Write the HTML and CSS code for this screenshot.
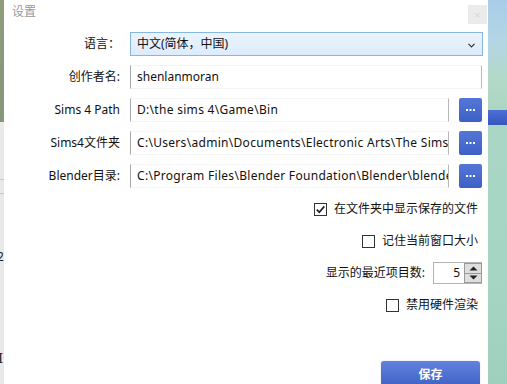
FILE: index.html
```html
<!DOCTYPE html>
<html>
<head>
<meta charset="utf-8">
<link rel="stylesheet" href="styles.css">
</head>
<body>
<div class="screen">
  <div class="left-edge">
    <div class="le-green"></div>
    <div class="le-grey">
      <div class="le-line first"></div>
      <div class="le-line"></div>
      <div class="le-digit">2</div>
      <div class="le-cursor">I</div>
    </div>
  </div>

  <div class="dialog">
    <div class="titlebar">
      <span class="title">设置</span>
      <span class="close">×</span>
    </div>

    <div class="form">
      <div class="row">
        <span class="lbl">语言：</span>
        <div class="combo">
          <span class="combo-text">中文(简体，中国)</span>
          <svg class="chev" width="7" height="5" viewBox="0 0 7 5"><path d="M0.5 0.8 L3.5 3.8 L6.5 0.8" fill="none" stroke="#333" stroke-width="1.2"/></svg>
        </div>
      </div>
      <div class="row">
        <span class="lbl">创作者名:</span>
        <div class="field wide">shenlanmoran</div>
      </div>
      <div class="row">
        <span class="lbl">Sims 4 Path</span>
        <div class="field path">D:\the sims 4\Game\Bin</div>
        <button class="browse" aria-label="..."><svg width="9" height="2" viewBox="0 0 9 2"><rect x="0" y="0" width="2" height="2" fill="#fff"/><rect x="3.5" y="0" width="2" height="2" fill="#fff"/><rect x="7" y="0" width="2" height="2" fill="#fff"/></svg></button>
      </div>
      <div class="row">
        <span class="lbl">Sims4文件夹</span>
        <div class="field path">C:\Users\admin\Documents\Electronic Arts\The Sims 4</div>
        <button class="browse" aria-label="..."><svg width="9" height="2" viewBox="0 0 9 2"><rect x="0" y="0" width="2" height="2" fill="#fff"/><rect x="3.5" y="0" width="2" height="2" fill="#fff"/><rect x="7" y="0" width="2" height="2" fill="#fff"/></svg></button>
      </div>
      <div class="row">
        <span class="lbl">Blender目录:</span>
        <div class="field path">C:\Program Files\Blender Foundation\Blender\blender.exe</div>
        <button class="browse" aria-label="..."><svg width="9" height="2" viewBox="0 0 9 2"><rect x="0" y="0" width="2" height="2" fill="#fff"/><rect x="3.5" y="0" width="2" height="2" fill="#fff"/><rect x="7" y="0" width="2" height="2" fill="#fff"/></svg></button>
      </div>
    </div>

    <div class="options">
      <div class="opt">
        <span class="cb"><svg width="11" height="11" viewBox="0 0 11 11"><path d="M1.8 5.6 L4.3 8.2 L9.3 2.4" fill="none" stroke="#222" stroke-width="1.7"/></svg></span>
        <span>在文件夹中显示保存的文件</span>
      </div>
      <div class="opt">
        <span class="cb"></span>
        <span>记住当前窗口大小</span>
      </div>
      <div class="opt spin-row">
        <span>显示的最近项目数:</span>
        <div class="spin">
          <span class="spin-val">5</span>
          <div class="spin-btns">
            <span class="spin-btn"><svg width="9" height="5" viewBox="0 0 9 5"><path d="M0.5 4.5 L4.5 0.5 L8.5 4.5 Z" fill="#222"/></svg></span>
            <span class="spin-btn"><svg width="9" height="5" viewBox="0 0 9 5"><path d="M0.5 0.5 L4.5 4.5 L8.5 0.5 Z" fill="#222"/></svg></span>
          </div>
        </div>
      </div>
      <div class="opt">
        <span class="cb"></span>
        <span>禁用硬件渲染</span>
      </div>
    </div>

    <div class="footer">
      <button class="save">保存</button>
    </div>
  </div>

  <div class="right-edge">
    <div class="re-top"></div>
    <div class="re-bar"></div>
    <div class="re-bottom"></div>
  </div>
</div>
</body>
</html>
```

FILE: styles.css
```css
html, body {
  margin: 0;
  padding: 0;
  overflow: hidden;
}
body {
  font-family: "Noto Sans", "Noto Sans CJK SC", sans-serif;
  font-size: 12px;
  color: #111;
}
.screen {
  display: flex;
  width: 507px;
  height: 384px;
  overflow: hidden;
}

/* left edge of background window */
.left-edge {
  width: 4px;
  flex: none;
  display: flex;
  flex-direction: column;
  overflow: hidden;
}
.le-green {
  height: 122px;
  flex: none;
  background: linear-gradient(#8f9d7e, #869676);
}
.le-grey {
  flex: 1;
  background: #e9e9e9;
  display: flex;
  flex-direction: column;
}
.le-line {
  height: 1px;
  flex: none;
  background: #c8c8c8;
  margin-top: 13px;
}
.le-line.first {
  margin-top: 57px;
}
.le-digit {
  flex: none;
  margin-top: 56px;
  margin-left: -3px;
  font-size: 12px;
  line-height: 14px;
  color: #222;
}
.le-cursor {
  flex: none;
  margin-top: 88px;
  margin-left: -2px;
  font-family: "DejaVu Serif", serif;
  font-size: 13px;
  line-height: 14px;
  color: #222;
}

/* dialog */
.dialog {
  width: 484px;
  flex: none;
  background: #fff;
  display: flex;
  flex-direction: column;
  overflow: hidden;
}
.dialog > * {
  flex: none;
}
.titlebar {
  height: 32px;
  display: flex;
  justify-content: space-between;
  align-items: flex-start;
  padding: 0 1px 0 8px;
  box-sizing: border-box;
}
.title {
  margin-top: 4px;
  line-height: 16px;
  color: #9a9a9a;
  font-size: 12px;
}
.close {
  margin-top: 5px;
  width: 19px;
  height: 19px;
  background: #ebebeb;
  color: #d8d8d8;
  font-size: 11px;
  line-height: 19px;
  text-align: center;
}

.form {
  display: flex;
  flex-direction: column;
  gap: 9px;
  padding-right: 5px;
}
.row {
  display: flex;
  align-items: center;
  height: 24px;
  flex: none;
}
.lbl {
  width: 116px;
  flex: none;
  text-align: right;
  margin-right: 10px;
  white-space: nowrap;
  line-height: 16px;
}
.combo {
  flex: 1;
  height: 24px;
  box-sizing: border-box;
  border: 1px solid #86b6e6;
  background: linear-gradient(#ecf4fc, #dcebfb);
  display: flex;
  align-items: center;
  justify-content: space-between;
  padding: 0 7px 0 6px;
}
.combo-text {
  line-height: 16px;
}
.chev {
  margin-top: 3px;
}
.field {
  flex: 1;
  min-width: 0;
  height: 24px;
  box-sizing: border-box;
  border-left: 1px solid #a9a9a9;
  border-right: 1px solid #b8b8b8;
  border-top: 1px solid #f4f4f4;
  border-bottom: 1px solid #f4f4f4;
  padding: 0 6px;
  line-height: 22px;
  white-space: nowrap;
  overflow: hidden;
}
.field.path {
  letter-spacing: 0.3px;
}
.field.wide {
  margin-right: 1px;
}
.browse {
  flex: none;
  width: 23px;
  height: 24px;
  margin-left: 10px;
  margin-right: 1px;
  border: none;
  border-radius: 2px;
  background: linear-gradient(#5477d6, #3d60c6);
  padding: 0;
  display: flex;
  align-items: center;
  justify-content: center;
}

.options {
  display: flex;
  flex-direction: column;
  align-items: flex-end;
  gap: 12px;
  margin-top: 11px;
  padding-right: 10px;
}
.opt {
  height: 20px;
  flex: none;
  display: flex;
  align-items: center;
  line-height: 16px;
  white-space: nowrap;
}
.cb {
  width: 13px;
  height: 13px;
  box-sizing: border-box;
  border: 1px solid #333;
  background: #fff;
  margin-right: 7px;
  display: flex;
  align-items: center;
  justify-content: center;
}
.spin-row {
  margin-right: -4px;
}
.spin {
  margin-left: 8px;
  width: 49px;
  height: 22px;
  box-sizing: border-box;
  border: 1px solid #b4b4b4;
  display: flex;
  justify-content: flex-end;
}
.spin-val {
  line-height: 20px;
  margin-right: 4px;
}
.spin-btns {
  width: 16px;
  display: flex;
  flex-direction: column;
  border-left: 1px solid #999;
}
.spin-btn {
  flex: 1;
  background: #dedede;
  border: 1px solid #9a9a9a;
  margin: 0 -1px 0 -1px;
  display: flex;
  align-items: center;
  justify-content: center;
}
.spin-btn + .spin-btn {
  border-top: none;
}

.footer {
  margin-top: 46px;
  display: flex;
  justify-content: flex-end;
  padding-right: 8px;
}
.save {
  width: 99px;
  height: 28px;
  flex: none;
  border: none;
  border-radius: 3px;
  background: linear-gradient(#6182de, #3d5fc4);
  color: #fff;
  font-family: "Noto Sans CJK SC", sans-serif;
  font-size: 12px;
  font-weight: bold;
  padding: 0 0 4px;
  box-shadow: 0 0 1px rgba(0,0,0,0.4);
}

/* right edge: desktop background */
.right-edge {
  flex: 1;
  display: flex;
  flex-direction: column;
}
.re-top {
  height: 110px;
  flex: none;
  background: linear-gradient(#a9cde9, #b4d6e4 40%, #b3d9c9 70%, #acd6c4);
}
.re-bar {
  height: 15px;
  flex: none;
  background: linear-gradient(#4c6fd4, #3557c0);
}
.re-bottom {
  flex: 1;
  background: linear-gradient(#aad7c5, #a6d5c3 60%, #9fd0bd);
}
```
